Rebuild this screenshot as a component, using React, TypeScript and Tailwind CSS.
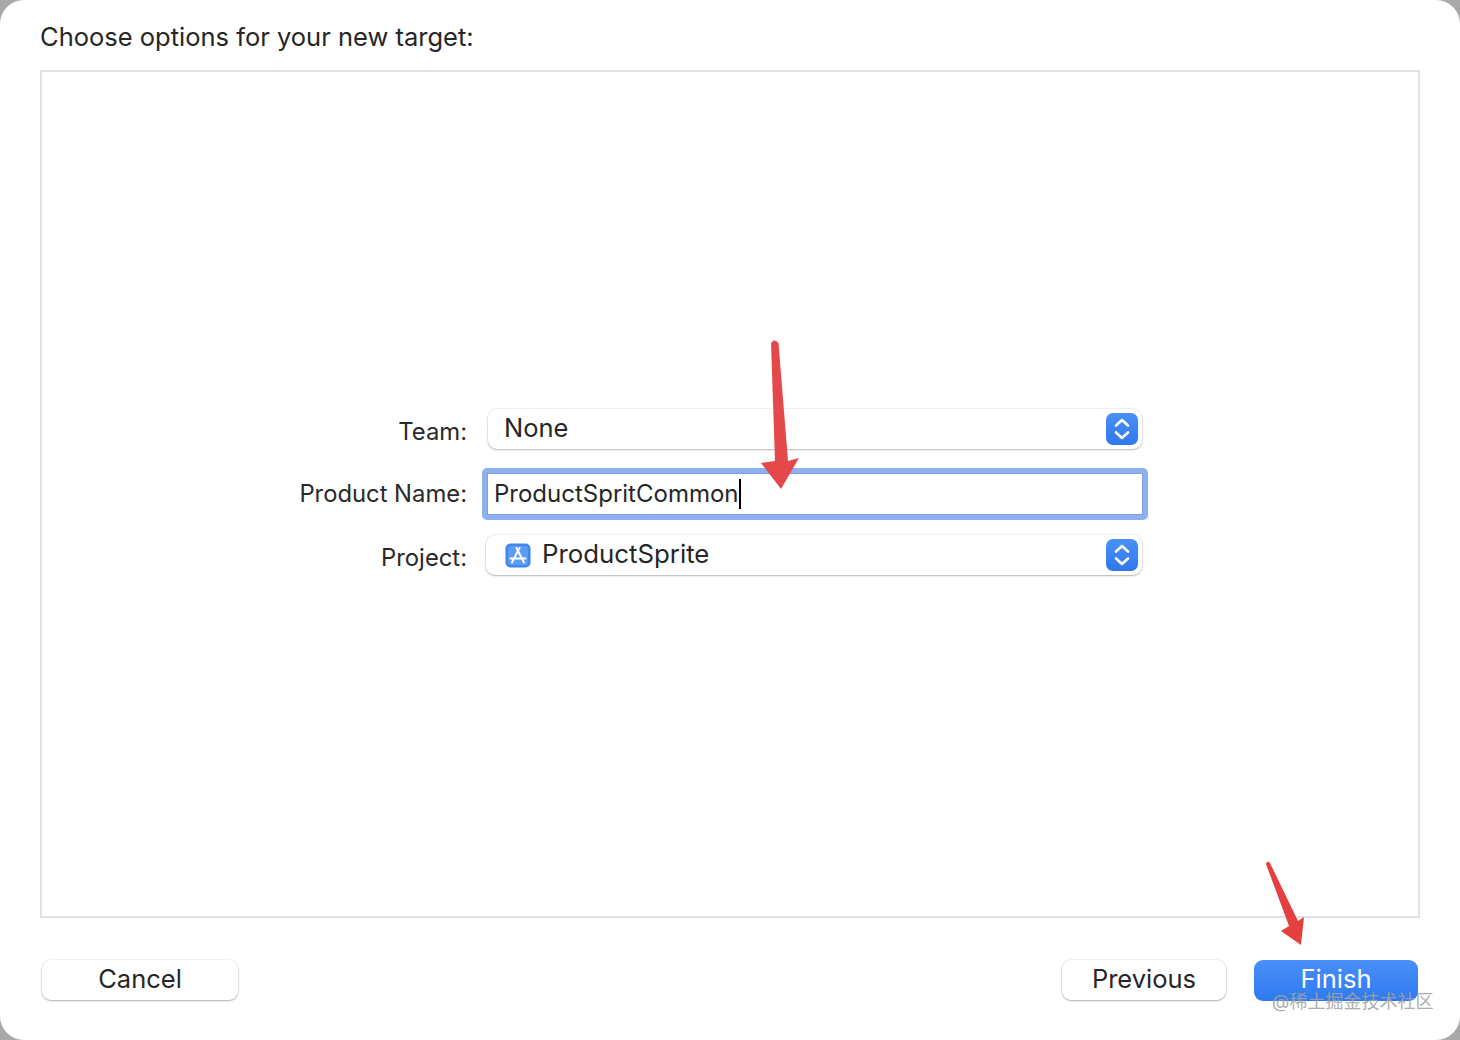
import React from "react";

const font = { fontFamily: '"Inter", "Noto Sans CJK SC", sans-serif' };

function Stepper() {
  return (
    <div className="flex h-[32px] w-[32px] shrink-0 items-center justify-center rounded-[7px] bg-gradient-to-b from-[#4a90f7] to-[#2f78ec]">
      <svg width="20" height="28" viewBox="0 0 20 28" fill="none" stroke="white" strokeWidth="2.6" strokeLinecap="round" strokeLinejoin="round">
        <path d="M4 10.5 L10 5 L16 10.5" />
        <path d="M4 17.5 L10 23 L16 17.5" />
      </svg>
    </div>
  );
}

function AppIcon() {
  return (
    <svg width="26" height="25" viewBox="0 0 26 25" className="shrink-0">
      <rect x="0.5" y="0.5" width="25" height="24" rx="5" fill="#3f86ee" />
      <rect x="3" y="3" width="20" height="19" rx="2.5" fill="#5c9bf2" />
      <g stroke="white" strokeWidth="2" strokeLinecap="round" fill="none">
        <path d="M11.5 5 L19 19.5" />
        <path d="M14.5 5 L7 19.5" />
        <path d="M5.5 15.5 H20.5" />
      </g>
    </svg>
  );
}

function Select({ children, className }: { children: React.ReactNode; className: string }) {
  return (
    <div className={`flex h-[40px] items-center justify-between rounded-[9px] bg-white pr-[4px] shadow-[0_1px_2px_rgba(0,0,0,0.25),0_0_0_1px_rgba(0,0,0,0.05)] ${className}`}>
      {children}
      <Stepper />
    </div>
  );
}

function Button({ children, primary, className }: { children: React.ReactNode; primary?: boolean; className: string }) {
  return (
    <div
      className={`flex items-center justify-center rounded-[9px] pb-[2px] text-[25.5px] ${
        primary
          ? "h-[41px] bg-gradient-to-b from-[#4a8ff8] to-[#2f7af0] text-white"
          : "h-[40px] bg-white text-[#262626] shadow-[0_1px_2px_rgba(0,0,0,0.28),0_0_0_1px_rgba(0,0,0,0.05)]"
      } ${className}`}
    >
      {children}
    </div>
  );
}

export default function App() {
  return (
    <div className="relative h-[1040px] w-[1460px] overflow-hidden bg-[#a9a9a9]" style={font}>
      <div className="flex h-full w-full flex-col rounded-[24px] bg-white px-[40px]">
        <div className="flex h-[70px] items-center pt-[5px] text-[25.5px] text-[#262626]">Choose options for your new target:</div>

        <div className="flex h-[848px] flex-col border-2 border-[#e1e1e1] pl-[240px] pt-[337px]">
          <div className="flex items-center">
            <div className="w-[185px] pt-[6px] text-right text-[23.8px] leading-[28px] text-[#2a2a2a]">Team:</div>
            <Select className="ml-[21px] w-[654px] pl-[16px]">
              <span className="-translate-y-[1px] text-[25.5px] leading-[32px] text-[#262626]">None</span>
            </Select>
          </div>
          <div className="mt-[19px] flex items-center">
            <div className="w-[185px] text-right text-[23.8px] leading-[28px] text-[#2a2a2a]">Product Name:</div>
            <div className="ml-[15px] flex h-[52px] w-[666px] items-center rounded-[5px] border-[5px] border-[#8fb0ef] bg-white pl-[7px] shadow-[inset_0_0_0_1px_#7f9fdc]">
              <span className="text-[24px] leading-[30px] text-[#262626]">ProductSpritCommon</span>
              <span className="h-[30px] w-[2px] bg-black" />
            </div>
          </div>
          <div className="mt-[15px] flex items-center">
            <div className="w-[185px] pt-[6px] text-right text-[23.8px] leading-[28px] text-[#2a2a2a]">Project:</div>
            <Select className="ml-[19px] w-[656px] pl-[19px]">
              <div className="flex flex-1 items-center gap-[11px]">
                <AppIcon />
                <span className="-translate-y-[1px] text-[25.8px] leading-[32px] text-[#262626]">ProductSprite</span>
              </div>
            </Select>
          </div>
        </div>

        <div className="flex items-start justify-between pl-[2px] pr-[2px] pt-[42px]">
          <Button className="w-[196px]">Cancel</Button>
          <div className="flex gap-[28px]">
            <Button className="w-[164px]">Previous</Button>
            <Button primary className="w-[164px]">Finish</Button>
          </div>
        </div>
      </div>

      <svg className="pointer-events-none absolute left-0 top-0" width="1460" height="1040" viewBox="0 0 1460 1040">
        <path d="M771 343 Q774.5 338 778.5 343 L788 461 L799 458 L781 489 L761 463 L775 461 Z" fill="#e5484a" />
        <path d="M1266 864 Q1267 860 1270 863 L1298 921 L1304 917 L1301 945 L1281 931 L1289 926 Z" fill="#e5403f" />
      </svg>

      <div className="absolute left-[1272px] top-[990px] whitespace-nowrap text-[18px] leading-[24px] text-[#a2a2a2]/90">
        @稀土掘金技术社区
      </div>
    </div>
  );
}
